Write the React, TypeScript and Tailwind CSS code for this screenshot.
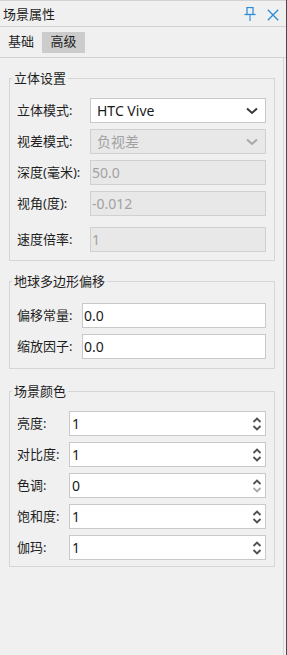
import React from "react";

const FONT = { fontFamily: '"Noto Sans", "Noto Sans CJK SC", sans-serif' };

function Chevron({ light = false }: { light?: boolean }) {
  return (
    <svg width="12" height="8" viewBox="0 0 12 8" className="shrink-0">
      <path d="M1 1.5 L6 6 L11 1.5" fill="none" stroke={light ? "#a8a8a8" : "#3a3a3a"} strokeWidth="2" />
    </svg>
  );
}

function SpinArrows({ downLight = false }: { downLight?: boolean }) {
  return (
    <svg width="10" height="16" viewBox="0 0 10 16" className="shrink-0">
      <path d="M1.5 6 L5 2.5 L8.5 6" fill="none" stroke="#505050" strokeWidth="1.8" />
      <path d="M1.5 10 L5 13.5 L8.5 10" fill="none" stroke={downLight ? "#aaa" : "#505050"} strokeWidth="1.8" />
    </svg>
  );
}

function Select({ value, disabled = false }: { value: string; disabled?: boolean }) {
  return (
    <div
      className={`flex items-center h-[25px] w-[176px] border px-[6px] ${
        disabled ? "bg-[#e8e8e8] border-[#d0d0d0] text-[#a2a2a2]" : "bg-white border-[#c9c9c9] text-[#1a1a1a]"
      }`}
    >
      <span className="flex-1 text-[14px] leading-[23px]">{value}</span>
      <span className="mr-[1px]"><Chevron light={disabled} /></span>
    </div>
  );
}

function TextBox({ value, disabled = false, w }: { value: string; disabled?: boolean; w: string }) {
  return (
    <div
      className={`flex items-center h-[25px] ${w} border pl-[1px] ${
        disabled ? "bg-[#e8e8e8] border-[#d0d0d0] text-[#a2a2a2]" : "bg-white border-[#c9c9c9] text-[#1a1a1a]"
      }`}
    >
      <span className="text-[14px] leading-[23px]">{value}</span>
    </div>
  );
}

function Spin({ value, downLight = false }: { value: string; downLight?: boolean }) {
  return (
    <div className="flex items-center h-[25px] w-[197px] border bg-white border-[#c9c9c9] pl-[2px] pr-[3px] text-[#1a1a1a]">
      <span className="flex-1 text-[14px] leading-[23px]">{value}</span>
      <SpinArrows downLight={downLight} />
    </div>
  );
}

function Label({ children, w }: { children: React.ReactNode; w: string }) {
  return <span className={`${w} shrink-0 text-[13px] leading-[25px] text-[#1e1e1e]`}>{children}</span>;
}

function Group({ title, children, className = "" }: { title: string; children: React.ReactNode; className?: string }) {
  return (
    <fieldset className={`mx-[9px] w-[266px] border border-[#d5d5d5] ${className}`}>
      <legend className="ml-[-5px] px-[2px] text-[13px] leading-[16px] text-[#1e1e1e]">{title}</legend>
      {children}
    </fieldset>
  );
}

export default function App() {
  return (
    <div className="w-[287px] h-[655px] bg-[#f0f0f0] flex flex-col border-r border-[#4a4a4a] overflow-hidden" style={FONT}>
      {/* title bar */}
      <div className="h-[27px] flex items-center border-t border-b border-[#d3d3d3] pl-[3px] pr-[7px] shrink-0">
        <span className="flex-1 text-[13px] text-[#1e1e1e] leading-[20px]">场景属性</span>
        <svg width="12" height="15" viewBox="0 0 12 15" className="mr-[11px] mt-[1px]">
          <path d="M2.5 0.5 H9.5" stroke="#2b8ad6" strokeWidth="1.3" />
          <path d="M3 0.5 V7 M9 0.5 V7" stroke="#2b8ad6" strokeWidth="1.2" />
          <path d="M0.5 7.5 H11.5" stroke="#2b8ad6" strokeWidth="1.3" />
          <path d="M6 8 V14" stroke="#7fb9e8" strokeWidth="2" />
        </svg>
        <svg width="12" height="12" viewBox="0 0 12 12" className="mt-[2px]">
          <path d="M0.8 0.8 L11.2 11.2 M11.2 0.8 L0.8 11.2" stroke="#2b8ad6" strokeWidth="1.3" />
        </svg>
      </div>
      {/* tabs */}
      <div className="h-[31px] flex items-center border-b border-[#d3d3d3] shrink-0">
        <div className="ml-[8px] h-[21px] flex items-center text-[13px] text-[#1e1e1e]">基础</div>
        <div className="ml-[8px] h-[21px] w-[43px] flex items-center justify-center bg-[#cccccc] text-[13px] text-[#1e1e1e]">高级</div>
      </div>
      {/* content */}
      <div className="flex-1 w-[284px] border-r border-[#d8d8d8] pt-[12px]">
        <Group title="立体设置" className="h-[191px] pl-[7px] pt-[12px]">
          <div className="flex items-center">
            <Label w="w-[73px]">立体模式:</Label>
            <Select value="HTC Vive" />
          </div>
          <div className="flex items-center mt-[6px]">
            <Label w="w-[73px]">视差模式:</Label>
            <Select value="负视差" disabled />
          </div>
          <div className="flex items-center mt-[6px]">
            <Label w="w-[73px]">深度(毫米):</Label>
            <TextBox value="50.0" disabled w="w-[176px]" />
          </div>
          <div className="flex items-center mt-[6px]">
            <Label w="w-[73px]">视角(度):</Label>
            <TextBox value="-0.012" disabled w="w-[176px]" />
          </div>
          <div className="flex items-center mt-[11px]">
            <Label w="w-[73px]">速度倍率:</Label>
            <TextBox value="1" disabled w="w-[176px]" />
          </div>
        </Group>
        <Group title="地球多边形偏移" className="mt-[12px] h-[96px] pl-[7px] pt-[14px]">
          <div className="flex items-center">
            <Label w="w-[65px]">偏移常量:</Label>
            <TextBox value="0.0" w="w-[184px]" />
          </div>
          <div className="flex items-center mt-[6px]">
            <Label w="w-[65px]">缩放因子:</Label>
            <TextBox value="0.0" w="w-[184px]" />
          </div>
        </Group>
        <Group title="场景颜色" className="mt-[14px] h-[184px] pl-[7px] pt-[12px]">
          <div className="flex items-center">
            <Label w="w-[52px]">亮度:</Label>
            <Spin value="1" />
          </div>
          <div className="flex items-center mt-[6px]">
            <Label w="w-[52px]">对比度:</Label>
            <Spin value="1" />
          </div>
          <div className="flex items-center mt-[6px]">
            <Label w="w-[52px]">色调:</Label>
            <Spin value="0" downLight />
          </div>
          <div className="flex items-center mt-[6px]">
            <Label w="w-[52px]">饱和度:</Label>
            <Spin value="1" />
          </div>
          <div className="flex items-center mt-[6px]">
            <Label w="w-[52px]">伽玛:</Label>
            <Spin value="1" />
          </div>
        </Group>
      </div>
    </div>
  );
}
